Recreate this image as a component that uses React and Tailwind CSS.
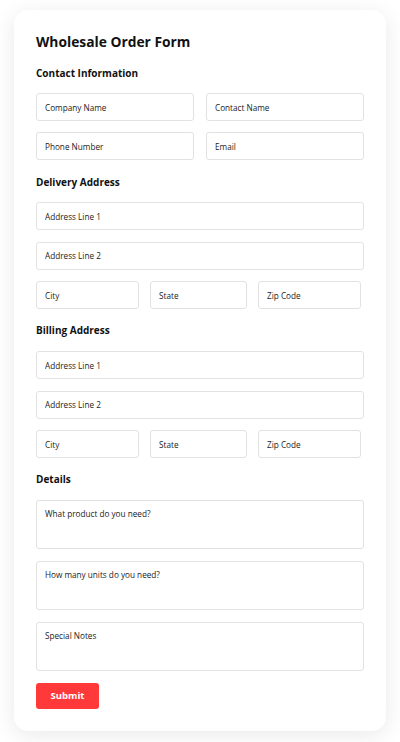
const font = { fontFamily: '"Open Sans", "Liberation Sans", sans-serif' };

function Field({ placeholder }) {
  return (
    <input
      type="text"
      placeholder={placeholder}
      className="h-[28px] w-full rounded-[3px] border border-[#e2e2e2] bg-white px-[8px] text-[8.2px] text-[#222] placeholder:text-[#222] focus:outline-none"
    />
  );
}

function Area({ placeholder }) {
  return (
    <textarea
      placeholder={placeholder}
      className="block h-[49px] w-full resize-none rounded-[3px] border border-[#e2e2e2] bg-white px-[8px] pt-[7px] text-[8.2px] leading-[11px] text-[#222] placeholder:text-[#222] focus:outline-none"
    />
  );
}

function Heading({ children }) {
  return <h2 className="text-[10px] font-bold leading-[16px] text-[#111]">{children}</h2>;
}

function AddressBlock() {
  return (
    <div className="flex flex-col gap-[11.5px]">
      <Field placeholder="Address Line 1" />
      <Field placeholder="Address Line 2" />
      <div className="grid grid-cols-[103px_97px_103px] gap-[11px]">
        <Field placeholder="City" />
        <Field placeholder="State" />
        <Field placeholder="Zip Code" />
      </div>
    </div>
  );
}

export default function App() {
  return (
    <div className="min-h-[742px] bg-white px-[14px] pt-[10px]" style={font}>
      <form className="flex flex-col rounded-[14px] bg-white px-[22px] pt-[22px] pb-[22px] shadow-[0_4px_22px_rgba(0,0,0,0.09)]">
        <h1 className="text-[13.8px] font-bold leading-[20px] text-[#111]">Wholesale Order Form</h1>

        <div className="mt-[13px] mb-[12px]">
          <Heading>Contact Information</Heading>
        </div>
        <div className="grid grid-cols-2 gap-x-3 gap-y-[11px]">
          <Field placeholder="Company Name" />
          <Field placeholder="Contact Name" />
          <Field placeholder="Phone Number" />
          <Field placeholder="Email" />
        </div>

        <div className="mt-[14px] mb-[12px]">
          <Heading>Delivery Address</Heading>
        </div>
        <AddressBlock />

        <div className="mt-[13px] mb-[13px]">
          <Heading>Billing Address</Heading>
        </div>
        <AddressBlock />

        <div className="mt-[13px] mb-[13px]">
          <Heading>Details</Heading>
        </div>
        <div className="flex flex-col gap-[12px]">
          <Area placeholder="What product do you need?" />
          <Area placeholder="How many units do you need?" />
          <Area placeholder="Special Notes" />
        </div>

        <div className="mt-[12px] flex">
          <button
            type="submit"
            className="block h-[26px] w-[63px] rounded-[3px] bg-[#ff3939] text-[9.5px] font-bold text-white"
          >
            Submit
          </button>
        </div>
      </form>
    </div>
  );
}
